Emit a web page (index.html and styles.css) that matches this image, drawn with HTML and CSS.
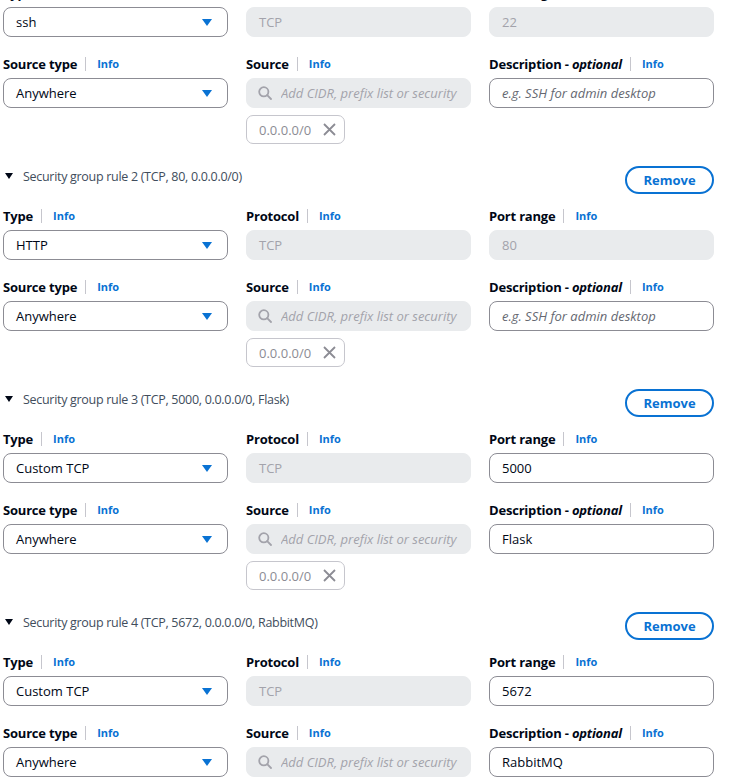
FILE: index.html
```html
<!DOCTYPE html>
<html>
<head>
<meta charset="utf-8">
<link rel="stylesheet" href="styles.css">
</head>
<body>
<div class="page">

  <section class="rule">
    <div class="rule-head">
      <div class="rule-title"><span class="tri"></span>Security group rule 1 (TCP, 22, 0.0.0.0/0)</div>
      <button class="remove">Remove</button>
    </div>
    <div class="row">
      <div class="field"><div class="label"><b>Type</b><span class="sep"></span><a class="info">Info</a></div>
        <div class="input select"><span>ssh</span><svg class="caret" width="10" height="7" viewBox="0 0 10 7"><path d="M0 0H10L5 7Z" fill="#0972d3"/></svg></div></div>
      <div class="field"><div class="label"><b>Protocol</b><span class="sep"></span><a class="info">Info</a></div>
        <div class="input disabled">TCP</div></div>
      <div class="field"><div class="label"><b>Port range</b><span class="sep"></span><a class="info">Info</a></div>
        <div class="input disabled">22</div></div>
    </div>
    <div class="row">
      <div class="field"><div class="label"><b>Source type</b><span class="sep"></span><a class="info">Info</a></div>
        <div class="input select"><span>Anywhere</span><svg class="caret" width="10" height="7" viewBox="0 0 10 7"><path d="M0 0H10L5 7Z" fill="#0972d3"/></svg></div></div>
      <div class="field"><div class="label"><b>Source</b><span class="sep"></span><a class="info">Info</a></div>
        <div class="input disabled search"><svg class="sicon" width="14" height="14" viewBox="0 0 14 14"><circle cx="5.8" cy="5.8" r="4.6" fill="none" stroke="#a3a3ab" stroke-width="1.8"/><path d="M9.2 9.2L13 13" stroke="#a3a3ab" stroke-width="1.8" stroke-linecap="round"/></svg><span class="ph">Add CIDR, prefix list or security group</span></div>
        <div class="chip"><span>0.0.0.0/0</span><svg width="13" height="13" viewBox="0 0 13 13"><path d="M1 1L12 12M12 1L1 12" stroke="#8c8c94" stroke-width="1.8"/></svg></div></div>
      <div class="field"><div class="label"><b>Description - <i>optional</i></b><span class="sep"></span><a class="info">Info</a></div>
        <div class="input text"><span class="ph2">e.g. SSH for admin desktop</span></div></div>
    </div>
  </section>

  <section class="rule">
    <div class="rule-head">
      <div class="rule-title"><span class="tri"></span>Security group rule 2 (TCP, 80, 0.0.0.0/0)</div>
      <button class="remove">Remove</button>
    </div>
    <div class="row">
      <div class="field"><div class="label"><b>Type</b><span class="sep"></span><a class="info">Info</a></div>
        <div class="input select"><span>HTTP</span><svg class="caret" width="10" height="7" viewBox="0 0 10 7"><path d="M0 0H10L5 7Z" fill="#0972d3"/></svg></div></div>
      <div class="field"><div class="label"><b>Protocol</b><span class="sep"></span><a class="info">Info</a></div>
        <div class="input disabled">TCP</div></div>
      <div class="field"><div class="label"><b>Port range</b><span class="sep"></span><a class="info">Info</a></div>
        <div class="input disabled">80</div></div>
    </div>
    <div class="row">
      <div class="field"><div class="label"><b>Source type</b><span class="sep"></span><a class="info">Info</a></div>
        <div class="input select"><span>Anywhere</span><svg class="caret" width="10" height="7" viewBox="0 0 10 7"><path d="M0 0H10L5 7Z" fill="#0972d3"/></svg></div></div>
      <div class="field"><div class="label"><b>Source</b><span class="sep"></span><a class="info">Info</a></div>
        <div class="input disabled search"><svg class="sicon" width="14" height="14" viewBox="0 0 14 14"><circle cx="5.8" cy="5.8" r="4.6" fill="none" stroke="#a3a3ab" stroke-width="1.8"/><path d="M9.2 9.2L13 13" stroke="#a3a3ab" stroke-width="1.8" stroke-linecap="round"/></svg><span class="ph">Add CIDR, prefix list or security group</span></div>
        <div class="chip"><span>0.0.0.0/0</span><svg width="13" height="13" viewBox="0 0 13 13"><path d="M1 1L12 12M12 1L1 12" stroke="#8c8c94" stroke-width="1.8"/></svg></div></div>
      <div class="field"><div class="label"><b>Description - <i>optional</i></b><span class="sep"></span><a class="info">Info</a></div>
        <div class="input text"><span class="ph2">e.g. SSH for admin desktop</span></div></div>
    </div>
  </section>

  <section class="rule">
    <div class="rule-head">
      <div class="rule-title"><span class="tri"></span>Security group rule 3 (TCP, 5000, 0.0.0.0/0, Flask)</div>
      <button class="remove">Remove</button>
    </div>
    <div class="row">
      <div class="field"><div class="label"><b>Type</b><span class="sep"></span><a class="info">Info</a></div>
        <div class="input select"><span>Custom TCP</span><svg class="caret" width="10" height="7" viewBox="0 0 10 7"><path d="M0 0H10L5 7Z" fill="#0972d3"/></svg></div></div>
      <div class="field"><div class="label"><b>Protocol</b><span class="sep"></span><a class="info">Info</a></div>
        <div class="input disabled">TCP</div></div>
      <div class="field"><div class="label"><b>Port range</b><span class="sep"></span><a class="info">Info</a></div>
        <div class="input text">5000</div></div>
    </div>
    <div class="row">
      <div class="field"><div class="label"><b>Source type</b><span class="sep"></span><a class="info">Info</a></div>
        <div class="input select"><span>Anywhere</span><svg class="caret" width="10" height="7" viewBox="0 0 10 7"><path d="M0 0H10L5 7Z" fill="#0972d3"/></svg></div></div>
      <div class="field"><div class="label"><b>Source</b><span class="sep"></span><a class="info">Info</a></div>
        <div class="input disabled search"><svg class="sicon" width="14" height="14" viewBox="0 0 14 14"><circle cx="5.8" cy="5.8" r="4.6" fill="none" stroke="#a3a3ab" stroke-width="1.8"/><path d="M9.2 9.2L13 13" stroke="#a3a3ab" stroke-width="1.8" stroke-linecap="round"/></svg><span class="ph">Add CIDR, prefix list or security group</span></div>
        <div class="chip"><span>0.0.0.0/0</span><svg width="13" height="13" viewBox="0 0 13 13"><path d="M1 1L12 12M12 1L1 12" stroke="#8c8c94" stroke-width="1.8"/></svg></div></div>
      <div class="field"><div class="label"><b>Description - <i>optional</i></b><span class="sep"></span><a class="info">Info</a></div>
        <div class="input text">Flask</div></div>
    </div>
  </section>

  <section class="rule">
    <div class="rule-head">
      <div class="rule-title"><span class="tri"></span>Security group rule 4 (TCP, 5672, 0.0.0.0/0, RabbitMQ)</div>
      <button class="remove">Remove</button>
    </div>
    <div class="row">
      <div class="field"><div class="label"><b>Type</b><span class="sep"></span><a class="info">Info</a></div>
        <div class="input select"><span>Custom TCP</span><svg class="caret" width="10" height="7" viewBox="0 0 10 7"><path d="M0 0H10L5 7Z" fill="#0972d3"/></svg></div></div>
      <div class="field"><div class="label"><b>Protocol</b><span class="sep"></span><a class="info">Info</a></div>
        <div class="input disabled">TCP</div></div>
      <div class="field"><div class="label"><b>Port range</b><span class="sep"></span><a class="info">Info</a></div>
        <div class="input text">5672</div></div>
    </div>
    <div class="row">
      <div class="field"><div class="label"><b>Source type</b><span class="sep"></span><a class="info">Info</a></div>
        <div class="input select"><span>Anywhere</span><svg class="caret" width="10" height="7" viewBox="0 0 10 7"><path d="M0 0H10L5 7Z" fill="#0972d3"/></svg></div></div>
      <div class="field"><div class="label"><b>Source</b><span class="sep"></span><a class="info">Info</a></div>
        <div class="input disabled search"><svg class="sicon" width="14" height="14" viewBox="0 0 14 14"><circle cx="5.8" cy="5.8" r="4.6" fill="none" stroke="#a3a3ab" stroke-width="1.8"/><path d="M9.2 9.2L13 13" stroke="#a3a3ab" stroke-width="1.8" stroke-linecap="round"/></svg><span class="ph">Add CIDR, prefix list or security group</span></div>
        <div class="chip"><span>0.0.0.0/0</span><svg width="13" height="13" viewBox="0 0 13 13"><path d="M1 1L12 12M12 1L1 12" stroke="#8c8c94" stroke-width="1.8"/></svg></div></div>
      <div class="field"><div class="label"><b>Description - <i>optional</i></b><span class="sep"></span><a class="info">Info</a></div>
        <div class="input text">RabbitMQ</div></div>
    </div>
  </section>

</div>
</body>
</html>
```

FILE: styles.css
```css
html, body {
  margin: 0;
  padding: 0;
  background: #ffffff;
}
body {
  font-family: "Open Sans", "Noto Sans", sans-serif;
  color: #000716;
  overflow: hidden;
}
.page {
  margin-top: -57px;
  padding-left: 3px;
  width: 711px;
}
.rule {
  margin-bottom: 22px;
}
.rule-head {
  display: flex;
  justify-content: space-between;
  align-items: flex-start;
  height: 28px;
}
.rule-title {
  display: flex;
  align-items: center;
  padding-top: 3px;
  height: 16px;
  font-size: 12.5px;
  line-height: 16px;
  color: #414d5c;
  letter-spacing: -0.3px;
}
.tri {
  width: 0;
  height: 0;
  border-left: 4px solid transparent;
  border-right: 4px solid transparent;
  border-top: 6px solid #000716;
  margin-left: 2px;
  margin-right: 10px;
  margin-top: -2px;
}
.remove {
  box-sizing: border-box;
  width: 89px;
  height: 28px;
  border: 2px solid #0972d3;
  border-radius: 20px;
  background: #ffffff;
  color: #0972d3;
  font-family: inherit;
  font-weight: 700;
  font-size: 13px;
  padding: 0 0 1px 0;
  margin-right: 0;
}
.row {
  display: grid;
  grid-template-columns: 225px 225px 225px;
  column-gap: 18px;
  margin-top: 10px;
}
.row + .row {
  margin-top: 15px;
}
.label {
  display: flex;
  align-items: center;
  height: 22px;
  margin-bottom: 4px;
  font-size: 13px;
  padding-top: 1px;
  box-sizing: border-box;
}
.label b {
  font-weight: 700;
  letter-spacing: -0.2px;
}
.label i {
  font-style: italic;
}
.sep {
  width: 1px;
  height: 14px;
  background: #c6c6cd;
  margin: 0 11px 0 8px;
}
.info {
  color: #0972d3;
  font-weight: 700;
  font-size: 11px;
}
.input {
  box-sizing: border-box;
  height: 30px;
  border-radius: 8px;
  border: 1px solid #8c8c94;
  padding: 0 12px;
  display: flex;
  align-items: center;
  font-size: 13px;
  white-space: nowrap;
  overflow: hidden;
}
.select {
  justify-content: space-between;
  padding-right: 15px;
}
.caret {
  display: block;
}
.disabled {
  background: #e9ebed;
  border-color: #e9ebed;
  color: #a3a3ab;
}
.search {
  padding-left: 11px;
}
.sicon {
  flex: none;
  margin-right: 9px;
}
.ph {
  font-style: italic;
  color: #a3a3ab;
  overflow: hidden;
}
.ph2 {
  font-style: italic;
  color: #656871;
}
.chip {
  box-sizing: border-box;
  margin-top: 7px;
  width: 99px;
  height: 29px;
  border: 1px solid #c6c6cd;
  border-radius: 7px;
  display: flex;
  align-items: center;
  justify-content: space-between;
  padding: 0 8px 0 12px;
  font-size: 13px;
  color: #8c8c94;
}
.chip svg {
  display: block;
}
```
